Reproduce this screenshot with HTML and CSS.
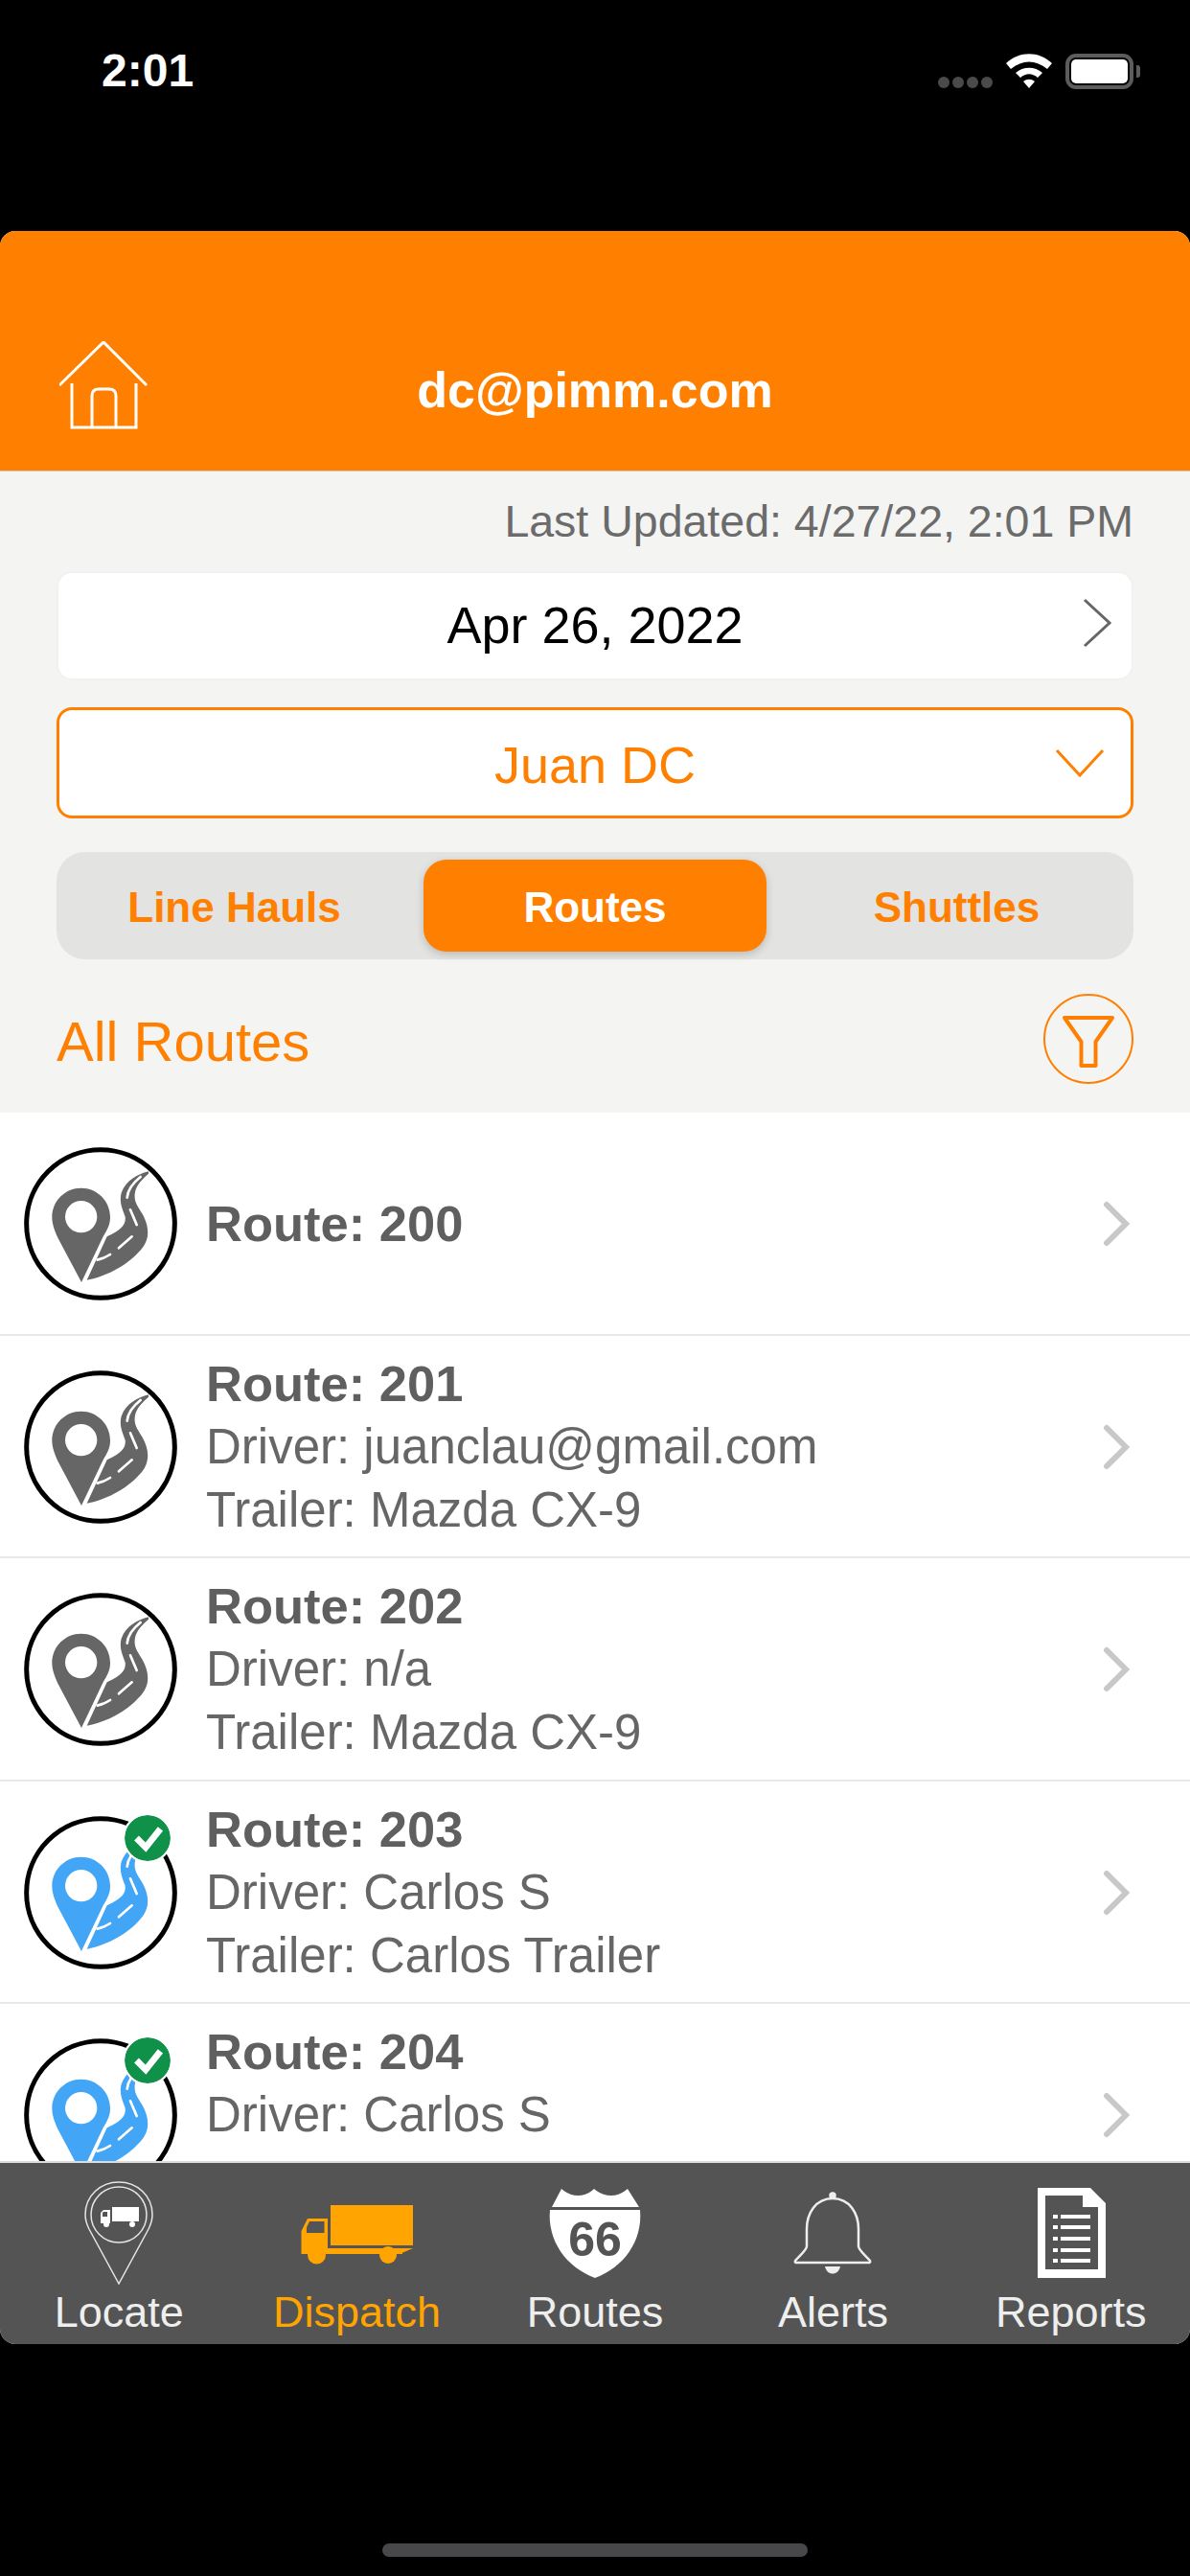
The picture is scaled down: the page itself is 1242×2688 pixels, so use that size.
FILE: index.html
```html
<!DOCTYPE html>
<html lang="en">
<head>
<meta charset="utf-8">
<title>Dispatch</title>
<link rel="stylesheet" href="styles.css">
</head>
<body>
<svg class="defs" width="0" height="0" aria-hidden="true">
  <defs>
    <symbol id="route-icon" viewBox="75 82 480 480">
      <circle cx="315" cy="322" r="232" fill="none" stroke="#000" stroke-width="15"/>
      <path fill="currentColor" fill-rule="evenodd" d="M254 210C204 210 163 250 163 302C163 325 172 345 182 368L255 505L323 362C335 342 345 325 345 302C345 250 304 210 254 210ZM204 300a50 50 0 1 0 100 0a50 50 0 1 0 -100 0Z"/>
      <path fill="currentColor" d="M465 158C430 168 395 185 380 225C372 255 385 280 392 300C395 325 380 340 335 362L272 498C325 490 395 455 435 410C470 375 470 335 445 290C430 265 415 250 425 215C432 195 450 178 465 165Z"/>
      <g fill="none" stroke="#fff" stroke-linecap="round" stroke-width="8">
        <path d="M398 240C400 215 415 195 440 175"/>
        <path d="M408 278C415 295 422 310 428 325"/>
        <path d="M413 362L372 398"/>
        <path d="M345 418C330 428 318 432 305 435"/>
      </g>
    </symbol>
    <symbol id="row-chevron" viewBox="0 0 30 48">
      <path d="M5 4L25 24L5 44" fill="none" stroke="#c8c8c8" stroke-width="6" stroke-linecap="round"/>
    </symbol>
    <symbol id="done-badge" viewBox="0 0 50 50">
      <circle cx="25" cy="25" r="25" fill="#0f9149"/>
      <path d="M13 25L23 35L39 15" fill="none" stroke="#fff" stroke-width="7"/>
    </symbol>
  </defs>
</svg>

<header class="status-bar">
  <span class="clock">2:01</span>
  <div class="status-icons">
    <span class="signal"><i></i><i></i><i></i><i></i></span>
    <svg class="wifi" viewBox="0 0 48 36"><path d="M0 10C14 -3 34 -3 48 10L43 16C31 6 17 6 5 16Z"/><path d="M10 20C18 13 30 13 38 20L33 25C27 20 21 20 15 25Z"/><path d="M18 29C22 26 26 26 30 29L24 36Z"/></svg>
    <span class="battery"><b></b></span>
  </div>
</header>

<main class="app">
  <div class="title-bar">
    <svg class="home-icon" viewBox="0 0 92 92" fill="none" stroke="#fff" stroke-width="3"><path d="M0 46L46 1L91 46"/><path d="M13 44V90H80V44M13 90H80"/><path d="M34 90V57Q34 50 41 50H52Q59 50 59 57V90"/></svg>
    <span class="account">dc@pimm.com</span>
  </div>

  <div class="controls">
    <p class="updated">Last Updated: 4/27/22, 2:01 PM</p>
    <div class="field date-field">
      <span>Apr 26, 2022</span>
      <svg class="chev-right" viewBox="0 0 32 52" fill="none" stroke="#666" stroke-width="3"><path d="M2 2L28 26L2 50"/></svg>
    </div>
    <div class="field driver-field">
      <span>Juan DC</span>
      <svg class="chev-down" viewBox="0 0 52 30" fill="none" stroke="#ff8000" stroke-width="3"><path d="M2 2L26 28L50 2"/></svg>
    </div>
    <div class="segments">
      <span class="segment">Line Hauls</span>
      <span class="segment active">Routes</span>
      <span class="segment">Shuttles</span>
    </div>
    <div class="list-head">
      <span class="list-title">All Routes</span>
      <svg class="filter-btn" viewBox="0 0 94 94" fill="none" stroke="#ff8000"><circle cx="47" cy="47" r="46" stroke-width="2"/><path d="M22 25H72L54.500 50V75H39.500V50Z" stroke-width="4" stroke-linejoin="round"/></svg>
    </div>
  </div>

  <ul class="routes">
    <li class="route">
      <span class="avatar"><svg class="glyph"><use href="#route-icon"/></svg></span>
      <div class="route-text"><strong>Route: 200</strong></div>
      <svg class="row-chev"><use href="#row-chevron"/></svg>
    </li>
    <li class="route">
      <span class="avatar"><svg class="glyph"><use href="#route-icon"/></svg></span>
      <div class="route-text"><strong>Route: 201</strong><span>Driver: juanclau@gmail.com</span><span>Trailer: Mazda CX-9</span></div>
      <svg class="row-chev"><use href="#row-chevron"/></svg>
    </li>
    <li class="route">
      <span class="avatar"><svg class="glyph"><use href="#route-icon"/></svg></span>
      <div class="route-text"><strong>Route: 202</strong><span>Driver: n/a</span><span>Trailer: Mazda CX-9</span></div>
      <svg class="row-chev"><use href="#row-chevron"/></svg>
    </li>
    <li class="route done">
      <span class="avatar"><svg class="glyph"><use href="#route-icon"/></svg><svg class="check"><use href="#done-badge"/></svg></span>
      <div class="route-text"><strong>Route: 203</strong><span>Driver: Carlos S</span><span>Trailer: Carlos Trailer</span></div>
      <svg class="row-chev"><use href="#row-chevron"/></svg>
    </li>
    <li class="route done">
      <span class="avatar"><svg class="glyph"><use href="#route-icon"/></svg><svg class="check"><use href="#done-badge"/></svg></span>
      <div class="route-text partial"><strong>Route: 204</strong><span>Driver: Carlos S</span></div>
      <svg class="row-chev"><use href="#row-chevron"/></svg>
    </li>
  </ul>

  <nav class="tabs">
    <div class="tab">
      <svg class="tab-icon" viewBox="0 0 124 108">
        <g fill="none" stroke="#e6e6e6" stroke-width="1.500"><path d="M62 107L31 50C28 44 27 40 27 35C27 15 43 1 62 1C81 1 97 15 97 35C97 40 96 44 93 50Z"/><circle cx="62" cy="35" r="29"/></g>
        <path fill="#fff" fill-rule="evenodd" d="M55 27H83V42H55ZM43 33L46 30H53V44H43ZM45 33V37H50V32H46Z"/>
        <circle cx="49" cy="45" r="3" fill="#fff"/><circle cx="76" cy="45" r="3" fill="#fff"/>
      </svg>
      <span>Locate</span>
    </div>
    <div class="tab current">
      <svg class="tab-icon" viewBox="0 0 124 108" fill="#ffa400">
        <path d="M34 25H120V67H34Z"/>
        <path fill-rule="evenodd" d="M3.500 52L10 39H31V70H109V76H14L3.500 76ZM12 42L9 48V54H27.500V42Z"/>
        <path d="M106 70H120L106 76Z"/>
        <circle cx="19.500" cy="77" r="9.500"/><circle cx="94" cy="77" r="9"/>
      </svg>
      <span>Dispatch</span>
    </div>
    <div class="tab">
      <svg class="tab-icon" viewBox="0 0 124 108" fill="#fff">
        <path d="M17 27L27 8Q35 15 44 15Q54 15 61 8Q69 15 79 15Q88 15 96 8L108 27Z"/>
        <path d="M15 30H109C112 62 92 90 62 101C32 90 12 62 15 30Z"/>
        <text class="shield-num" x="62" y="78" text-anchor="middle">66</text>
      </svg>
      <span>Routes</span>
    </div>
    <div class="tab">
      <svg class="tab-icon" viewBox="0 0 124 108" fill="none" stroke="#eee" stroke-width="2.500">
        <path d="M62 18C44 18 35 34 35 50V68C35 72 27 78 23 83Q22 85 25 85H99Q102 85 101 83C97 78 89 72 89 68V50C89 34 80 18 62 18Z"/>
        <circle cx="62" cy="15" r="2.500" fill="#eee"/>
        <path d="M54 89H70C68 99 56 99 54 89Z" fill="#eee" stroke="none"/>
      </svg>
      <span>Alerts</span>
    </div>
    <div class="tab">
      <svg class="tab-icon" viewBox="0 0 124 108" fill="#fff">
        <path fill-rule="evenodd" d="M27 7H82L98 23V101H27ZM35 15V92H90V27H74V15Z"/>
        <path d="M51 35H82V39H51ZM51 46H82V50H51ZM51 58H82V62H51ZM51 70H82V74H51ZM51 81H82V85H51ZM43 35H48V39H43ZM43 46H48V50H43ZM43 58H48V62H43ZM43 70H48V74H43ZM43 81H48V85H43Z"/>
      </svg>
      <span>Reports</span>
    </div>
  </nav>
</main>

<div class="home-indicator"></div>
</body>
</html>
```
FILE: styles.css
```css
* { box-sizing: border-box; }
html, body { margin: 0; padding: 0; }
body {
  width: 1242px;
  height: 2688px;
  background: #000;
  font-family: "Liberation Sans", Arial, sans-serif;
  display: flex;
  flex-direction: column;
  overflow: hidden;
}
.defs { position: absolute; }

.status-bar {
  height: 241px;
  flex: none;
  padding: 43px 59px 0 106px;
  display: flex;
  justify-content: space-between;
  align-items: flex-start;
  color: #fff;
}
.clock { font-size: 48px; font-weight: 700; line-height: 62px; }
.status-icons { display: flex; align-items: flex-end; gap: 14px; height: 62px; margin-top: -12px; }
.signal { display: flex; gap: 3px; margin-bottom: 1px; }
.signal i { width: 12px; height: 12px; border-radius: 50%; background: #4a4a4a; }
.wifi { width: 48px; height: 36px; fill: #fff; margin-bottom: 1px; }
.battery {
  width: 71px; height: 37px; border: 4px solid #5c5c5c; border-radius: 11px; padding: 2px; position: relative;
}
.battery b { display: block; width: 100%; height: 100%; background: #fff; border-radius: 5px; }
.battery::after {
  content: ""; position: absolute; right: -11px; top: 8px; width: 4px; height: 13px; background: #5c5c5c; border-radius: 0 3px 3px 0;
}

.app {
  height: 2205px;
  flex: none;
  border-radius: 16px;
  overflow: hidden;
  background: #f4f4f3;
  display: flex;
  flex-direction: column;
}
.title-bar {
  height: 251px;
  flex: none;
  background: #ff8000;
  position: relative;
  display: flex;
  justify-content: center;
  align-items: flex-end;
  padding-bottom: 55px;
  border-bottom: 1px solid #c9c9c9;
}
.account { color: #fff; font-size: 52px; font-weight: 700; line-height: 58px; }
.home-icon { position: absolute; left: 62px; top: 115px; width: 92px; height: 92px; }

.controls { flex: none; height: 669px; padding: 0 59px; display: flex; flex-direction: column; }
.updated { margin: 28px 0 0; text-align: right; color: #6b6b6b; font-size: 46.500px; line-height: 48px; height: 48px; }
.field {
  position: relative;
  border-radius: 14px;
  background: #fff;
  display: flex;
  align-items: center;
  justify-content: center;
  font-size: 54px;
}
.date-field { margin: 30px 2px 0; height: 110px; color: #000; padding-bottom: 3px; box-shadow: 0 0 3px #e9e9f2; }
.driver-field { margin-top: 30px; height: 116px; color: #ff8000; border: 3px solid #ff8000; border-radius: 16px; padding-top: 3px; }
.chev-right { position: absolute; right: 19px; top: 26px; width: 32px; height: 52px; }
.chev-down { position: absolute; right: 27px; top: 40px; width: 52px; height: 30px; }

.segments {
  margin-top: 35px;
  height: 112px;
  border-radius: 30px;
  background: #e3e3e2;
  display: grid;
  grid-template-columns: 1fr 358px 1fr;
  padding: 8px 0;
}
.segment {
  display: flex; align-items: center; justify-content: center;
  color: #ff8000; font-size: 44px; font-weight: 700; border-radius: 24px; padding-top: 4px;
}
.segment:first-child { padding-right: 12px; }
.segment:last-child { padding-left: 14px; }
.segment.active { background: #ff8000; color: #fff; box-shadow: 0 3px 8px rgba(0,0,0,.18); }

.list-head { margin-top: 36px; display: flex; justify-content: space-between; align-items: center; }
.list-title { color: #ff8000; font-size: 58px; padding-top: 5px; }
.filter-btn { width: 94px; height: 94px; flex: none; }

.routes { flex: 1; min-height: 0; margin: 0; padding: 0; list-style: none; overflow: hidden; background: #fff; }
.route {
  height: 232.500px;
  display: flex;
  align-items: center;
  padding: 2px 62px 0 25px;
  border-bottom: 2px solid #e8e8e8;
}
.avatar { position: relative; flex: none; width: 160px; height: 160px; margin-right: 30px; color: #666; }
.route.done .avatar { color: #42a5f5; }
.glyph { display: block; width: 160px; height: 160px; }
.check {
  position: absolute; left: 103px; top: -3px; width: 52px; height: 52px;
  border: 2px solid #fff; border-radius: 50%; background: #fff;
}
.route-text { flex: 1; display: flex; flex-direction: column; font-size: 51px; line-height: 66px; color: #666; }
.route-text.partial { min-height: 198px; }
.route-text strong { font-size: 52.500px; font-weight: 700; color: #5f5f5f; }
.row-chev { width: 30px; height: 48px; flex: none; }

.tabs {
  flex: none;
  height: 191px;
  background: #545454;
  border-top: 2px solid #dcdcdc;
  display: grid;
  grid-template-columns: repeat(5, 1fr);
}
.tab { display: flex; flex-direction: column; align-items: center; padding-top: 19px; color: #eee; font-size: 45px; line-height: 58px; }
.tab.current { color: #ffa400; }
.tab-icon { width: 124px; height: 108px; flex: none; }
.shield-num { font: 700 50px "Liberation Sans", Arial, sans-serif; fill: #545454; }

.home-indicator {
  margin: 208px auto 0;
  width: 444px; height: 14px;
  border-radius: 7px;
  background: #48484a;
  flex: none;
}
```
